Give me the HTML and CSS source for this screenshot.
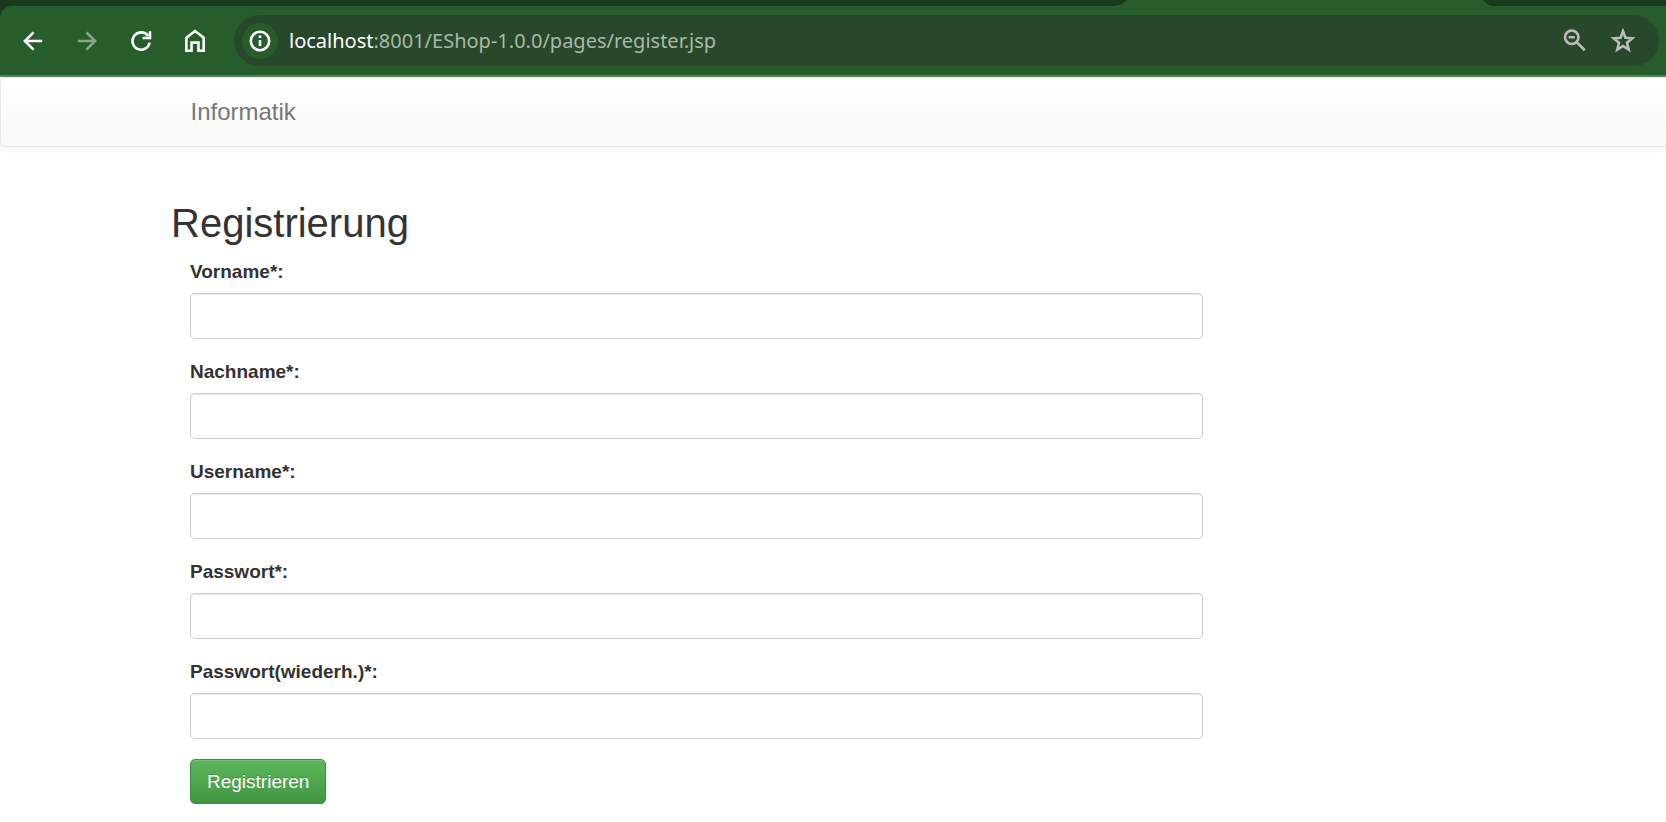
FILE: index.html
```html
<!DOCTYPE html>
<html lang="de">
<head>
<meta charset="utf-8">
<title>Registrierung</title>
<link rel="stylesheet" href="styles.css">
</head>
<body>
<header class="browser">
  <div class="tabstrip"><div class="active-tab"></div></div>
  <div class="toolbar">
    <nav class="tools" aria-label="Browser">
      <button class="tool" type="button" aria-label="Zurück"><svg viewBox="0 0 24 24"><path d="M20.500 12H4.500M12.500 4L4.500 12l8 8"/></svg></button>
      <button class="tool" type="button" aria-label="Vorwärts" disabled><svg viewBox="0 0 24 24"><path d="M3.500 12h16M11.500 4l8 8-8 8"/></svg></button>
      <button class="tool" type="button" aria-label="Neu laden"><svg viewBox="0 0 24 24"><path d="M20 13.500A8 8 0 1 1 18.600 7.300"/><path d="M20.300 3v7M21.500 9.200H13.500"/></svg></button>
      <button class="tool" type="button" aria-label="Startseite"><svg viewBox="0 0 24 24"><path d="M4 9L12 2.800 20 9v12h-4.800v-7.500H8.800V21H4z"/></svg></button>
    </nav>
    <div class="address">
      <button class="site-info" type="button" aria-label="Website-Informationen"><svg viewBox="0 0 24 24"><circle cx="12" cy="12" r="8.500"/><path d="M12 11v5.500M12 7v2.200"/></svg></button>
      <span class="url"><span class="host">localhost</span>:8001/EShop-1.0.0/pages/register.jsp</span>
      <button class="action" type="button" aria-label="Zoom"><svg viewBox="0 0 24 24"><circle cx="9" cy="8.500" r="6.200"/><path d="M13.700 13.200l7.300 7.300M6.200 8.500h5.600"/></svg></button>
      <button class="action" type="button" aria-label="Lesezeichen"><svg viewBox="0 0 24 24"><path d="M12 3l2.300 6 6.300.5-4.900 4.100 1.600 6.400-5.300-3.400L6.700 20l1.600-6.400-4.900-4.100 6.300-.5z"/></svg></button>
    </div>
  </div>
</header>
<nav class="navbar"><div class="container"><a class="brand" href="#">Informatik</a></div></nav>
<main class="container">
  <h1 class="title">Registrierung</h1>
  <form class="form">
    <div class="field"><label for="vorname">Vorname*:</label><input id="vorname" type="text"></div>
    <div class="field"><label for="nachname">Nachname*:</label><input id="nachname" type="text"></div>
    <div class="field"><label for="username">Username*:</label><input id="username" type="text"></div>
    <div class="field"><label for="passwort">Passwort*:</label><input id="passwort" type="password"></div>
    <div class="field"><label for="wiederholung">Passwort(wiederh.)*:</label><input id="wiederholung" type="password"></div>
    <button class="submit" type="submit">Registrieren</button>
  </form>
</main>
</body>
</html>
```
FILE: styles.css
```css
* { box-sizing: border-box; }
body { margin: 0; background: #fff; color: #333; font: 19px/27px "Liberation Sans", Arial, sans-serif; }
button { padding: 0; border: 0; background: none; color: inherit; font: inherit; }
svg { display: block; width: 26px; height: 26px; fill: none; stroke: currentColor; stroke-width: 2.4; }

.browser { background: #1b391b; }
.tabstrip { display: flex; height: 6px; padding: 0 174px 0 1114px; overflow: hidden; }
.active-tab { flex: 1; background: #275d2b; clip-path: polygon(13px 0, calc(100% - 9px) 0, calc(100% - 5px) 4px, 100% 6px, 0 6px, 8px 4px); }
.toolbar { display: flex; align-items: center; gap: 26px; height: 71px; padding: 0 7px 0 20px; border-bottom: 2px solid #568859; border-radius: 12px 0 0 0; background: #275d2b; }
.tools { display: flex; gap: 28px; color: #fff; }
.tool:disabled { opacity: .45; }
.address { display: flex; flex: 1; align-items: center; gap: 22px; height: 51px; padding: 0 23px 0 8px; border-radius: 26px; background: #27482a; color: #bcbcbc; }
.site-info { display: grid; place-items: center; width: 36px; height: 36px; border-radius: 50%; background: #275d2b; color: #fff; }
.url { flex: 1; margin-left: -11px; color: #a9b8aa; font: 20px/28px "Noto Sans", sans-serif; }
.host { color: #fff; }

.container { max-width: 1324px; margin: 0 auto; }
.navbar { height: 70px; border: 1px solid #e7e7e7; border-right: 0; border-radius: 5px 0 0 5px; background: linear-gradient(#fff, #f8f8f8); box-shadow: 0 1px 7px rgba(0, 0, 0, .08); }
.brand { display: inline-block; padding: 20px 19px; color: #777; font-size: 24px; text-decoration: none; }
.title { margin: 54px 0 13px; font-size: 40px; font-weight: 400; line-height: 44px; }
.form { max-width: 1051px; padding: 0 19px; }
.field { display: flex; flex-direction: column; gap: 8px; margin-bottom: 19px; }
.field label { font-weight: 700; }
.field input { width: 100%; height: 46px; padding: 8px 16px; border: 1px solid #ccc; border-radius: 5px; background: #fff; box-shadow: inset 0 1px 1px rgba(0, 0, 0, .08); color: #555; font: inherit; }
.submit { margin-top: 1px; padding: 8px 16px; border: 1px solid #3e8f3e; border-radius: 5px; background: linear-gradient(#5cb85c, #419641); box-shadow: inset 0 1px 0 rgba(255, 255, 255, .15), 0 1px 1px rgba(0, 0, 0, .08); color: #fff; text-shadow: 0 -1px 0 rgba(0, 0, 0, .2); }
```
